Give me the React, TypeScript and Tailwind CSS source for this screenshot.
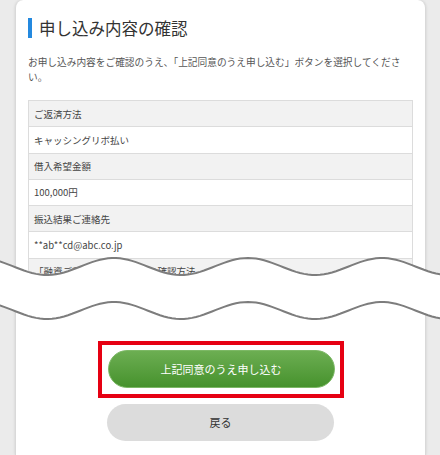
import React from 'react';

const rows = [
  { label: 'ご返済方法', head: true },
  { label: 'キャッシングリボ払い', head: false },
  { label: '借入希望金額', head: true },
  { label: '100,000円', head: false },
  { label: '振込結果ご連絡先', head: true },
  { label: '**ab**cd@abc.co.jp', head: false },
  { label: '「融資ご利用時の明細書」の確認方法', head: true },
];

// wave line across the page (break mark)
const wave = (offset: number, reverse = false) => {
  const pts: string[] = [];
  for (let x = -4; x <= 444; x += 4) {
    const y = 16.5 + offset + 8.5 * Math.cos((2 * Math.PI * (x - 47)) / 134);
    pts.push(`${x},${y.toFixed(2)}`);
  }
  if (reverse) pts.reverse();
  return pts;
};

const WaveBreak: React.FC = () => {
  const top = wave(0);
  const bottom = wave(44, true);
  return (
    <svg className="absolute left-0 top-[250px]" width="440" height="80" viewBox="0 0 440 80">
      <path d={`M${top.join(' L')} L${bottom.join(' L')} Z`} fill="#fff" />
      <path d={`M${top.join(' L')}`} fill="none" stroke="#7d7d7d" strokeWidth="2" />
      <path d={`M${wave(44).join(' L')}`} fill="none" stroke="#7d7d7d" strokeWidth="2" />
    </svg>
  );
};

export default function App() {
  return (
    <div className="relative h-[455px] w-[440px] overflow-hidden bg-[#ebebeb] pl-[15px] pr-[14px] font-['Noto_Sans_CJK_JP',sans-serif]">
      <div className="h-full rounded-t-lg border-l border-r border-[#d9d9d9] bg-white px-[12px] pt-[17px] shadow-[0_0_3px_rgba(0,0,0,0.12)]">
        {/* Title */}
        <div className="flex items-center gap-[7px]">
          <span className="h-[20px] w-[4px] bg-[#2489df]" />
          <h1 className="text-[16.5px] leading-[22px] text-[#333]">申し込み内容の確認</h1>
        </div>

        <p className="mt-[16px] w-[386px] text-[9.7px] leading-[15px] text-[#555]">
          お申し込み内容をご確認のうえ、「上記同意のうえ申し込む」ボタンを選択してください。
        </p>

        {/* Table */}
        <div className="mt-[15px] border-t border-[#dcdcdc]">
          {rows.map(r => (
            <div
              key={r.label}
              className={`flex h-[26.3px] items-center border-b border-l border-r border-[#dcdcdc] px-[5px] text-[9.5px] text-[#444] ${
                r.head ? 'bg-[#f2f2f2]' : 'bg-white'
              }`}
            >
              {r.label}
            </div>
          ))}
        </div>

        {/* Buttons */}
        <div className="mt-[56px] flex flex-col items-center">
          <div className="border-[4px] border-[#e60012] pb-[6px] pl-[6px] pr-[5px] pt-[5px]">
            <button className="flex h-[38px] w-[227px] items-center justify-center rounded-full border border-[#7cb865] bg-gradient-to-b from-[#6cae52] to-[#46922c] text-[11px] text-white">
              上記同意のうえ申し込む
            </button>
          </div>
          <button className="mt-[6px] flex h-[37px] w-[227px] items-center justify-center rounded-full bg-[#dcdcdc] text-[11px] text-[#333]">
            戻る
          </button>
        </div>
      </div>
      <WaveBreak />
    </div>
  );
}
